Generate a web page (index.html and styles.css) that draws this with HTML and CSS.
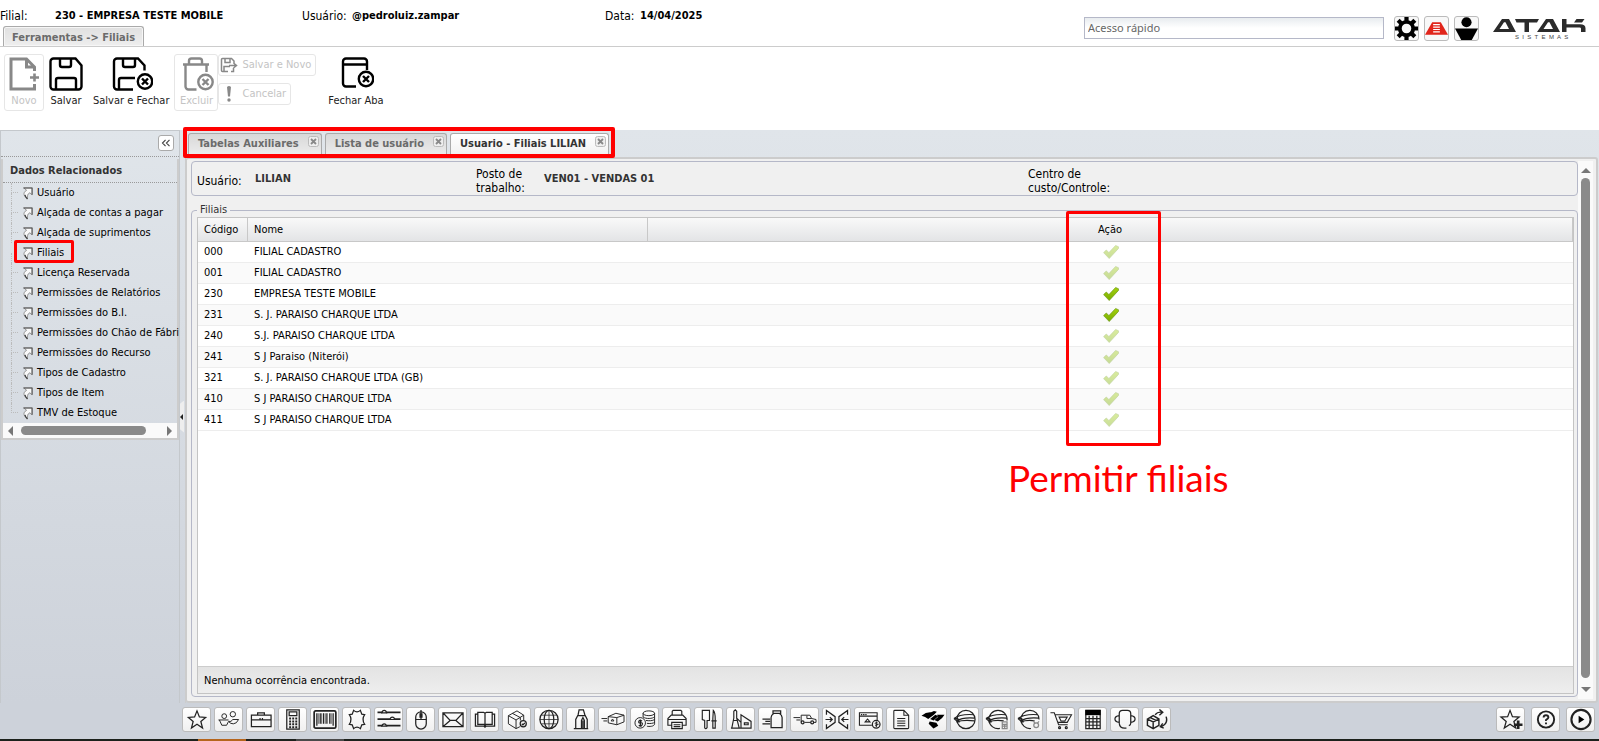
FILE: index.html
```html
<!DOCTYPE html>
<html lang="pt-BR">
<head>
<meta charset="utf-8">
<title>Usuario - Filiais LILIAN</title>
<link rel="stylesheet" href="styles.css">
</head>
<body>
<svg class="defs" aria-hidden="true">
  <defs>
    <linearGradient id="green" x1="0" y1="0" x2="0" y2="1"><stop offset="0" stop-color="#a4d20c"/><stop offset="1" stop-color="#78ac00"/></linearGradient>
    <symbol id="check" viewBox="0 0 16 16"><path d="M.6 8.600 3.300 6l2.600 2.600L12.600 1.500l2.900 1.300v1.600L6.200 14.500z" fill="url(#green)" stroke="#6f9a1c" stroke-width=".7"/></symbol>
    <symbol id="link" viewBox="0 0 12 14"><path d="M2 1.500h9v7.500L8.600 6.800C5.500 8 6 11 6 13 2.500 11 0 7 5 4z" fill="#fafafa" stroke="#888" stroke-width="1"/><path d="M1.500 1.500H11v7.500" fill="none" stroke="#555" stroke-width="1.100"/><path d="M3.200 9q.5 2.500 2.800 4.500" fill="none" stroke="#444" stroke-width="1.500"/></symbol>
    <symbol id="x" viewBox="0 0 11 11"><rect x=".5" y=".5" width="10" height="10" rx="2" fill="#eee" stroke="#bbb"/><path d="M3 3l5 5M8 3l-5 5" stroke="#888" stroke-width="1.800"/></symbol>
  </defs>
</svg>

<header class="top">
  <div class="top-left">
    <div class="session">
      <span class="s-label w-filial">Filial:</span><b class="s-value w-empresa">230 - EMPRESA TESTE MOBILE</b>
      <span class="s-label w-user">Usuário:</span><b class="s-value w-login">@pedroluiz.zampar</b>
      <span class="s-label w-date">Data:</span><b class="s-value">14/04/2025</b>
    </div>
    <div class="ribbon-tabs"><button class="ribbon-tab" type="button">Ferramentas -&gt; Filiais</button></div>
  </div>
  <div class="top-right">
    <input class="quick" type="text" placeholder="Acesso rápido" aria-label="Acesso rápido">
    <button class="sq" type="button" aria-label="Configurações"><svg viewBox="0 0 24 24"><circle cx="12" cy="12" r="7" fill="none" stroke="#000" stroke-width="4"/><g stroke="#000" stroke-width="4.400"><path d="M12 0v5M12 19v5M0 12h5M19 12h5M3.300 3.300l3.400 3.400M17.300 17.300l3.400 3.400M20.700 3.300l-3.400 3.400M6.700 17.300l-3.400 3.400"/></g></svg></button>
    <button class="sq" type="button" aria-label="Estrutura"><svg viewBox="0 0 24 24"><path d="M7.500 5.500h9L24 18.500H0z" fill="#e1251b"/><path d="M8.500 8h7M8.500 10.500h7M8.500 13h7M8.500 15.500h7" stroke="#fff" stroke-width="1.200"/></svg></button>
    <button class="sq" type="button" aria-label="Perfil"><svg viewBox="0 0 24 24"><circle cx="12" cy="5.500" r="5.300"/><path d="M0 12h24l-6.500 12h-11z"/></svg></button>
    <svg class="logo" viewBox="0 0 94 21" role="img" aria-label="ATAK Sistemas">
      <g fill="#2b2b2b" fill-rule="evenodd"><path d="M0 13 9 0h7l7 13zM6.500 10h9.500L12.500 3.300h-1.500z"/><path d="M22 0h24l-2 3.400H36V13h-4.500V3.400H23.500z"/><path d="M44 13 53 0h7l7 13zM50.500 10h9.500L56.500 3.300h-1.500z"/><path d="M69 0h4.500v5.200H87q5.500 0 5.500 4V13H88V9.600q0-1.200-1.500-1.200H73.500V13H69zM81 3.600 83.500 0h8L89 3.600z"/></g>
      <text x="22" y="20" font-size="6" font-family="Liberation Sans, sans-serif" fill="#444">S&#160; I&#160; S&#160; T&#160; E&#160; M&#160; A&#160; S</text>
    </svg>
  </div>
</header>

<nav class="ribbon" aria-label="Ferramentas">
  <button class="big off" type="button" disabled><svg viewBox="0 0 32 36"><path d="M26.500 15V11L18.500 3H3v30h23.500v-5M18.500 3v8h8" fill="none" stroke="#888" stroke-width="3"/><path d="M22 21.500h9M26.500 17.500v8" stroke="#888" stroke-width="2.600"/></svg>Novo</button>
  <button class="big" type="button"><svg viewBox="0 0 36 36"><g fill="none" stroke="#000" stroke-width="2.400"><path d="M5.500 2.500h22l6 7v21a3 3 0 0 1-3 3h-25a3 3 0 0 1-3-3v-25a3 3 0 0 1 3-3z"/><path d="M12 3v6a2 2 0 0 0 2 2h7a2 2 0 0 0 2-2V3M8 33V24a2 2 0 0 1 2-2h16a2 2 0 0 1 2 2v9"/></g></svg>Salvar</button>
  <button class="big wide" type="button"><svg viewBox="0 0 44 36"><g fill="none" stroke="#000" stroke-width="2.400"><path d="M24 33.500H8a3 3 0 0 1-3-3v-25a3 3 0 0 1 3-3h21l6.500 7v5"/><path d="M14 3v6a2 2 0 0 0 2 2h8a2 2 0 0 0 2-2V3M10 33V24a2 2 0 0 1 2-2h14"/><circle cx="36" cy="25.500" r="7.200"/><path d="M33 22.500l6 6M39 22.500l-6 6"/></g></svg>Salvar e Fechar</button>
  <button class="big off" type="button" disabled><svg viewBox="0 0 36 36"><g fill="none" stroke="#888" stroke-width="2.400"><path d="M5 8.500h26M11 8V5a2.500 2.500 0 0 1 2.500-2.500h8A2.500 2.500 0 0 1 24 5v3M7.500 8v22.500a3 3 0 0 0 3 3h8M28.500 8v8"/><circle cx="27.500" cy="26" r="7.200"/><path d="M24.500 23l6 6M30.500 23l-6 6"/></g></svg>Excluir</button>
  <div class="stack">
    <button class="small off" type="button" disabled><svg viewBox="0 0 18 16"><g fill="none" stroke="#888" stroke-width="1.500"><path d="M8 14.500H2.500a1 1 0 0 1-1-1v-11a1 1 0 0 1 1-1h9L14 4v2M5 2v3.500h5V2M4 14V9.500h6M11 14.500h2.500V11M9 8.500h7M13.500 6l3 2.500-3 2.500"/></g></svg>Salvar e Novo</button>
    <button class="small off" type="button" disabled><svg viewBox="0 0 18 16"><path d="M7 1q2-2 4 0l-1 9.500H8z" fill="#888"/><circle cx="9" cy="14" r="1.700" fill="#888"/></svg>Cancelar</button>
  </div>
  <button class="big tab-close" type="button"><svg viewBox="0 0 36 36"><g fill="none" stroke="#000" stroke-width="2.400"><path d="M18 30.500H8a3 3 0 0 1-3-3v-22a3 3 0 0 1 3-3h18a3 3 0 0 1 3 3V14M5 8.500h24"/><circle cx="28" cy="23" r="7.200"/><path d="M25 20l6 6M31 20l-6 6"/></g></svg>Fechar Aba</button>
</nav>

<div class="work">
  <aside class="side">
    <div class="side-head"><button class="fold" type="button" aria-label="Recolher"><svg viewBox="0 0 16 16"><path d="M7.500 4.500 4 8l3.500 3.500M12 4.500 8.500 8l3.500 3.500" fill="none" stroke="#444" stroke-width="1.300"/></svg></button></div>
    <div class="related">
      <h2>Dados Relacionados</h2>
      <ul class="tree">
        <li><svg><use href="#link"/></svg><a href="#">Usuário</a></li>
        <li><svg><use href="#link"/></svg><a href="#">Alçada de contas a pagar</a></li>
        <li><svg><use href="#link"/></svg><a href="#">Alçada de suprimentos</a></li>
        <li class="marked"><svg><use href="#link"/></svg><a href="#">Filiais</a></li>
        <li><svg><use href="#link"/></svg><a href="#">Licença Reservada</a></li>
        <li><svg><use href="#link"/></svg><a href="#">Permissões de Relatórios</a></li>
        <li><svg><use href="#link"/></svg><a href="#">Permissões do B.I.</a></li>
        <li><svg><use href="#link"/></svg><a href="#">Permissões do Chão de Fábri</a></li>
        <li><svg><use href="#link"/></svg><a href="#">Permissões do Recurso</a></li>
        <li><svg><use href="#link"/></svg><a href="#">Tipos de Cadastro</a></li>
        <li><svg><use href="#link"/></svg><a href="#">Tipos de Item</a></li>
        <li><svg><use href="#link"/></svg><a href="#">TMV de Estoque</a></li>
      </ul>
      <div class="hscroll"><i class="arr left"></i><span class="track"><i class="thumb"></i></span><i class="arr right"></i></div>
    </div>
  </aside>
  <div class="split"><i></i></div>

  <main class="main">
    <div class="tabs">
      <div class="tab"><button type="button">Tabelas Auxiliares</button><svg class="close"><use href="#x"/></svg></div>
      <div class="tab"><button type="button">Lista de usuário</button><svg class="close"><use href="#x"/></svg></div>
      <div class="tab active"><button type="button">Usuario - Filiais LILIAN</button><svg class="close"><use href="#x"/></svg></div>
    </div>
    <div class="panel">
      <div class="content">
        <section class="info">
          <span class="i-label">Usuário:</span><b>LILIAN</b>
          <span class="i-label">Posto de trabalho:</span><b>VEN01 - VENDAS 01</b>
          <span class="i-label">Centro de custo/Controle:</span>
        </section>
        <fieldset class="group">
          <legend>Filiais</legend>
          <div class="grid">
            <table>
              <colgroup><col class="c-code"><col class="c-name"><col></colgroup>
              <thead><tr><th>Código</th><th>Nome</th><th class="act">Ação<span class="frame"></span><span class="note">Permitir filiais</span></th></tr></thead>
              <tbody>
                <tr><td>000</td><td>FILIAL CADASTRO</td><td class="act"><svg class="dim"><use href="#check"/></svg></td></tr>
                <tr><td>001</td><td>FILIAL CADASTRO</td><td class="act"><svg class="dim"><use href="#check"/></svg></td></tr>
                <tr><td>230</td><td>EMPRESA TESTE MOBILE</td><td class="act"><svg><use href="#check"/></svg></td></tr>
                <tr><td>231</td><td>S. J. PARAISO CHARQUE LTDA</td><td class="act"><svg><use href="#check"/></svg></td></tr>
                <tr><td>240</td><td>S.J. PARAISO CHARQUE LTDA</td><td class="act"><svg class="dim"><use href="#check"/></svg></td></tr>
                <tr><td>241</td><td>S J Paraiso (Niterói)</td><td class="act"><svg class="dim"><use href="#check"/></svg></td></tr>
                <tr><td>321</td><td>S. J. PARAISO CHARQUE LTDA (GB)</td><td class="act"><svg class="dim"><use href="#check"/></svg></td></tr>
                <tr><td>410</td><td>S J PARAISO CHARQUE LTDA</td><td class="act"><svg class="dim"><use href="#check"/></svg></td></tr>
                <tr><td>411</td><td>S J PARAISO CHARQUE LTDA</td><td class="act"><svg class="dim"><use href="#check"/></svg></td></tr>
              </tbody>
            </table>
            <div class="status">Nenhuma ocorrência encontrada.</div>
          </div>
        </fieldset>
      </div>
      <div class="vscroll"><i class="arr up"></i><span class="track"><i class="thumb"></i></span><i class="arr down"></i></div>
    </div>
  </main>
</div>

<footer class="dock">
  <div class="modules">
    <button type="button" aria-label="Favoritos"><svg viewBox="0 0 24 24"><path d="M12 3l2.500 6.300 6.500.5-5 4.200 1.800 7-5.800-4-5.800 4L8 14 3 9.800l6.500-.5z"/></svg></button>
    <button type="button" aria-label="Pesagem"><svg viewBox="0 0 24 24"><g stroke-width="1"><circle cx="7" cy="8.500" r="2.500"/><circle cx="16" cy="6.500" r="2.800"/><path d="M1 12.500h10.500M2 12.500l2.500 5.500h5l2-4M12 14.500q1.500 2 4.500 2 3.500 0 5.500-4.500h-6l-2 2h-2.500"/></g></svg></button>
    <button type="button" aria-label="Maleta"><svg viewBox="0 0 24 24"><path d="M2 7.500h20.500v12H2zM2 12.500h20.500M8.500 7.500V5h7v2.500M11 10.500v2M13.500 10.500v2"/></svg></button>
    <button type="button" aria-label="Calculadora"><svg viewBox="0 0 24 24"><path d="M5.500 2h13v20h-13z"/><path d="M8 4h8v4H8z"/><path d="M8 11h8.500M8 14h8.500M8 17h8.500M8 20h8.500" stroke-width="2" stroke-dasharray="2 1.200"/></svg></button>
    <button type="button" aria-label="Código de barras"><svg viewBox="0 0 24 24"><rect x=".7" y="3" width="22.600" height="18" rx="1.500" stroke-width="1.800"/><path d="M3.500 5.500v13M7 5.500v11M10.500 5.500v11M14 5.500v11M17 5.500v11M20.500 5.500v13"/><path d="M5 5.500v11M8.500 5.500v11M12.300 5.500v11M18.500 5.500v11" stroke-width=".7"/></svg></button>
    <button type="button" aria-label="Couro"><svg viewBox="0 0 24 24"><path d="M8.500 2.500q3.500 3 7 0l1.500 4 3 .5q-3.500 5 0 10l-3 .5-1.500 4q-3.500-3-7 0l-1.500-4-3-.5q3.500-5 0-10l3-.5z"/></svg></button>
    <button type="button" aria-label="Parâmetros"><svg viewBox="0 0 24 24"><path d="M0 4.500h5M9 4.500h15M0 11.500h13M18 11.500h6M0 18.500h5M9.500 18.500h14.500" stroke-width="1.800"/><path d="M4.500 5q.5-2.500 2.500-2.500T9.500 5zM13 12q.5-2.500 2.500-2.500T18 12zM4.500 19q.5-2.500 2.500-2.500T9.500 19z"/></svg></button>
    <button type="button" aria-label="Mouse"><svg viewBox="0 0 24 24"><rect x="6.500" y="4" width="11" height="18" rx="5.500"/><path d="M6.500 12h11M12 2v10M11 6h2v3.500h-2z"/></svg></button>
    <button type="button" aria-label="Mensagens"><svg viewBox="0 0 24 24"><path d="M1.500 5h21v14.500h-21zM1.500 5l7.500 8h6l7.500-8M1.500 19.500L9 13M22.500 19.500L15 13"/></svg></button>
    <button type="button" aria-label="Livro"><svg viewBox="0 0 24 24"><path d="M4.500 6.500H2V19h9l1 1 1-1h9V6.500h-2.500M12 5.500V19M4.500 4.500h6l1.500 1 1.500-1h6V17H13l-1 1-1-1H4.500z"/></svg></button>
    <button type="button" aria-label="Estoque"><svg viewBox="0 0 24 24"><path d="M3 8l9-5 7 4.500v6M3 8v8.500l8 5 4-2M3 8l8 4.500 8-5M11 12.500v9M7 5.500l8.500 4.500v3" stroke-width="1"/><circle cx="18.500" cy="16.500" r="3.200"/><path d="M17 16.500l1.200 1.200 2-2.200"/></svg></button>
    <button type="button" aria-label="Global"><svg viewBox="0 0 24 24"><circle cx="12" cy="12" r="9.500"/><ellipse cx="12" cy="12" rx="5" ry="9.500"/><path d="M12 2.500v19M4 7.500h16M2.500 12h19M4 16.500h16" stroke-width=".8"/></svg></button>
    <button type="button" aria-label="Silo"><svg viewBox="0 0 24 24"><path d="M4.500 21.500h15M6.500 21.500V12L9 7l1-5h4.500l1.500 5 2.500 5v9.500M8.500 8h8M12.500 21v-8l1.500-3 1.500 3v8M14 13v8"/></svg></button>
    <button type="button" aria-label="Expedição"><svg viewBox="0 0 24 24"><path d="M7 9l8-3.500 8.500 2v7L16 17.500 7 15.500zM16 17.500V10M7 9l9 1 7.500-2.500M0 11h6M2 13.500h4M10 13.500l1.500-2 1.500 2z" stroke-width="1"/></svg></button>
    <button type="button" aria-label="Financeiro"><svg viewBox="0 0 24 24"><g stroke-width="1"><ellipse cx="16" cy="5.500" rx="6" ry="2.500"/><path d="M10 5.500v4M22 5.500v11c0 3-6 3-8 2.500M10 9.500c3 2 10 2 12-.5M13 13c3 .5 7 .5 9-1M14 16c3 .5 7 0 8-1"/><circle cx="7" cy="15.500" r="5.500"/></g><path d="M9 13.500q-3-1.500-3.500.5t2 1.500 1.500 2-3.500.5M7.200 12v7" stroke-width="1.200"/></svg></button>
    <button type="button" aria-label="Impressora"><svg viewBox="0 0 24 24"><path d="M7 7.500V3.500l1-1h8l1 1v4M6 18H2.500v-7l3.500-3.500h12l3.500 3.500v7H18M6.500 15h11v6.500h-11zM2.500 12h19M8.500 17.500h7M8.500 19.500h7" stroke-width="1.200"/></svg></button>
    <button type="button" aria-label="Corte"><svg viewBox="0 0 24 24"><path d="M5 2.500h7.500V13H10v7.500q-1.500 2-2.500 0V13L5 12zM16.500 2.500q2 2 2 9v9.500h-2.500v-9.500zM14.500 13.500h5.500" stroke-width="1.200"/></svg></button>
    <button type="button" aria-label="Indústria"><svg viewBox="0 0 24 24"><path d="M1.500 21h21v-7L12 7v14M2.500 20.500l2-10V3.500L6 2l1.500 1.500v7l2.500 10M4 13h4M7.500 10.500L12 15M15.500 15.500h4v2h-4z" stroke-width="1.200"/></svg></button>
    <button type="button" aria-label="Leite"><svg viewBox="0 0 24 24"><path d="M12 3h8v2.500h-8zM13 5.500q-3 2-3 4.500v10.500h11.500V10q0-2.500-3-4.500M1 11.500h8M4 14h5M1 16.500h8"/></svg></button>
    <button type="button" aria-label="Frete"><svg viewBox="0 0 24 24"><path d="M0 10h7M3 12.500h4M8 14.500v-7h9l2 3.500 4.500 1v3h-2.500M18 15h-6.500M14 8v3h5" stroke-width="1"/><circle cx="9.500" cy="15" r="1.500"/><circle cx="19.500" cy="15" r="1.500"/></svg></button>
    <button type="button" aria-label="Integração"><svg viewBox="0 0 24 24"><path d="M1 7V2.500l9 6.500v6l-9 6.500V17M23 7V2.500L14 9v6l9 6.500V17M0 12h7M4.500 9.500 7 12l-2.500 2.500M24 12h-7M19.500 9.500 17 12l2.500 2.500"/></svg></button>
    <button type="button" aria-label="Cobrança"><svg viewBox="0 0 24 24"><path d="M15 18H2V5h18.500v8M2 8.500h18.500M8 14.500l2.500-3 2.500 3z" stroke-width="1.100"/><path d="M3.500 6.800h6" stroke-dasharray="1.500 .8"/><circle cx="19.500" cy="17" r="4"/><path d="M21 15.500q-2.500-1-2.500.5t2.500 1-2.500 1.500M19.700 14v6" stroke-width="1"/></svg></button>
    <button type="button" aria-label="Documentos"><svg viewBox="0 0 24 24"><path d="M4.500 3.500q0-1 1-1h9.500l5 5v13q0 1-1 1H5.500q-1 0-1-1zM15 2.500v5h5M8 11h8.500M8 13.500h8.500M8 16h8.500M8 18.500h8.500" stroke-width="1.100"/></svg></button>
    <button type="button" aria-label="Receita"><svg viewBox="0 0 24 24"><g class="solid"><path d="M0 8q5-4 10-3.500l3-1.500 3 1-3 3-6 4.500Q4 9 0 8z"/><path d="M9 11.500l5.500-4.500 3 1.500-5 4.500z"/><path d="M16 7l8 0q-2 4-7 7l-3.500-1.500 4-3.500z"/><path d="M8.500 14l7 1.500 2 3-5 3-5-5z"/></g></svg></button>
    <button type="button" aria-label="Fiscal"><svg viewBox="0 0 24 24"><circle cx="13" cy="12" r="9.500"/><path d="M.5 11Q7 6 21 7M.5 11l3 2.500Q9 9.500 22 10.500M3 14.500q8-2.500 19-1M1 11h3.500v3.500h2" stroke-width="1.200"/></svg></button>
    <button type="button" aria-label="Fiscal cálculo"><svg viewBox="0 0 24 24"><path d="M15 21.300A9.500 9.500 0 1 1 22.500 13M.5 11Q7 6 21 7M.5 11l3 2.500Q9 9.500 22 10.500M3 14.500q8-2.500 16-1M1 11h3.500v3.500h2" stroke-width="1.200"/><g class="grey"><path d="M17.500 14.500h5v7h-5zM17.500 17h5M17.500 19h5M20 17v4"/></g></svg></button>
    <button type="button" aria-label="Fiscal ajustes"><svg viewBox="0 0 24 24"><path d="M14 21.400A9.500 9.500 0 1 1 22.500 12M.5 11Q7 6 21 7M.5 11l3 2.500Q9 9.500 22 10.500M3 14.500q8-2.500 15-1M1 11h3.500v3.500h2" stroke-width="1.200"/><g class="grey"><circle cx="19.500" cy="18" r="2.500"/><path d="M16.500 14l2 2M22.500 14l-2 2"/></g></svg></button>
    <button type="button" aria-label="Compras"><svg viewBox="0 0 24 24"><path d="M1 5h4l4.500 12.500H19M6 7h17l-4.500 8H9M10 9.500h8.500l-2.500 4h-4z" stroke-width="1.100"/><circle cx="10.500" cy="20.500" r="1"/><circle cx="17.500" cy="20.500" r="1"/></svg></button>
    <button type="button" aria-label="Planilha"><svg viewBox="0 0 24 24"><path d="M4.500 2.500h15v19h-15zM4.500 11h15M4.500 14.500h15M4.500 18h15M8 8v13M12 8v13M16 8v13"/><path class="solid" d="M4 2h16v5.500H4z"/></svg></button>
    <button type="button" aria-label="Suporte"><svg viewBox="0 0 24 24"><path d="M6 16V6q0-3.500 3.500-3.500h5Q18 2.500 18 6v10M6 8q-4.500.5-4.500 3.500T6 15M18 8q4.500.5 4.500 3.500T18 15M6 16q.5 5 5.500 5h2M18 16q0 2-2 2.500"/></svg></button>
    <button type="button" aria-label="Devolução"><svg viewBox="0 0 24 24"><path d="M2 11.500l6-3.500 6 3.500v6.500l-6 3.500-6-3.500zM2 11.500l6 3 6-3M8 14.500v7M5 10l6 3M10 7q3-3.500 7-2.500M14.500 1.500l3.500 3-3.500 3M16 19.500q8-3 5.500-10.500M19 21l-3.500-1.500L18 16" stroke-width="1.500"/></svg></button>
  </div>
  <div class="helpers">
    <button type="button" aria-label="Adicionar favorito"><svg viewBox="0 0 24 24"><path d="M11 2.500l2.500 6.500 7 .500-5.500 4.500L17 21l-6-4-6 4 2-7L1.500 9.500l7-.5z"/><path d="M19.500 13v9M15 17.500h9" stroke-width="2.800"/></svg></button>
    <button type="button" aria-label="Ajuda"><svg viewBox="0 0 24 24"><circle cx="12" cy="12" r="8.500" stroke-width="2"/><path d="M9.500 10q0-2.500 2.500-2.500T14.500 10q0 1-2.500 2.500v1M12 15v2" stroke-width="2"/></svg></button>
    <button type="button" aria-label="Executar"><svg viewBox="0 0 24 24"><circle cx="12" cy="12" r="10" stroke-width="2.200"/><path class="solid" d="M9.500 8v8l6-4z"/></svg></button>
  </div>
</footer>
<div class="desk"></div>
</body>
</html>
```
FILE: styles.css
```css
*, *::before, *::after { box-sizing: border-box; }
html, body { margin: 0; height: 100%; }
body {
  display: flex; flex-direction: column; min-height: 100vh;
  font: 11px/14px "DejaVu Sans Condensed", "DejaVu Sans", sans-serif;
  font-stretch: condensed;
  color: #000; background: #fff;
}
button { font: inherit; color: inherit; cursor: pointer; padding: 0; }
.defs { position: absolute; width: 0; height: 0; }

/* header */
.top { display: flex; justify-content: space-between; height: 47px; border-bottom: 1px solid #ccc; }
.top-left { display: flex; flex-direction: column; justify-content: space-between; }
.session { display: flex; align-items: center; padding-top: 9px; white-space: nowrap; }
.s-label { font-size: 12px; }
.w-filial { width: 55px; }
.w-empresa { width: 247px; }
.w-user { width: 50px; }
.w-login { width: 253px; }
.w-date { width: 35px; }
.ribbon-tabs { padding-left: 3px; height: 20px; }
.ribbon-tab {
  height: 20px; padding: 2px 8px 0; border: 1px solid #aaa; border-bottom: 0; border-radius: 3px 3px 0 0;
  background: linear-gradient(#e0e0e0, #eee); color: #6b6b6b; font-weight: bold; box-shadow: inset 0 0 0 1px #f6f6f6;
}
.top-right { display: flex; align-items: flex-start; gap: 5px; padding: 16px 12px 0 0; }
.quick {
  width: 300px; height: 22px; margin: 1px 5px 0 0; padding: 0 3px 2px; border: 1px solid #b5b8c8;
  background: linear-gradient(#e8ecef, #fff 10px); font: 11px "Noto Sans", sans-serif;
}
.quick::placeholder { color: #666; }
.sq { width: 25px; height: 25px; border: 1px solid #bbb; border-radius: 3px; background: #f8f8f8; }
.sq svg { display: block; width: 23px; height: 23px; }
.logo { width: 94px; height: 21px; margin: 3px 0 0 9px; }

/* ribbon */
.ribbon { display: flex; align-items: flex-start; height: 83px; padding: 7px 0 0 4px; }
.big {
  display: flex; flex-direction: column; align-items: center; gap: 2px; height: 57px; padding: 2px 3px 0;
  border: 1px solid transparent; border-radius: 3px; background: none; white-space: nowrap; color: #222;
}
.big svg { height: 36px; margin-top: -1px; }
.off, .off:disabled { color: #c4c4c4; border-color: #e6e6e6; cursor: default; }
.big.wide { padding: 2px 2px 0; margin: 0 2px; }
.stack { display: flex; flex-direction: column; align-items: flex-start; gap: 7px; }
.small { display: flex; align-items: center; gap: 4px; height: 22px; padding: 0 4px 0 1px; border: 1px solid #e6e6e6; border-radius: 3px; background: none; }
.small svg { width: 18px; height: 16px; }
.tab-close { margin-left: 8px; }

/* work area */
.work { flex: 1; display: flex; min-height: 0; background: linear-gradient(#e0e5ea, #cdd2da); }
.side { width: 180px; border: 1px solid #c4c8cc; border-bottom: 0; }
.side-head { display: flex; justify-content: flex-end; height: 26px; padding: 4px 5px 0 0; border-bottom: 1px dotted #999; }
.fold { width: 16px; height: 16px; border: 1px solid #aaa; border-radius: 3px; background: #fff; }
.fold svg { display: block; width: 14px; height: 14px; }
.related { margin-top: 2px; border: solid #ccc; border-width: 0 2px 2px; }
.related h2 { margin: 0; height: 24px; padding-left: 7px; border-bottom: 1px dotted #999; font: bold 11px/24px "DejaVu Sans Condensed", sans-serif; font-stretch: condensed; color: #333; }
.tree { margin: 0; padding: 0; list-style: none; }
.tree li { position: relative; display: flex; align-items: center; gap: 4px; height: 20px; padding-left: 19px; white-space: nowrap; }
.tree li::before { content: ""; position: absolute; left: 8px; top: 0; width: 7px; height: 10px; border: dotted #bbb; border-width: 0 0 1px 1px; }
.tree li:not(:last-child)::after { content: ""; position: absolute; left: 8px; top: 10px; height: 10px; border-left: 1px dotted #bbb; }
.tree svg { flex: none; width: 11px; height: 14px; }
.tree a { color: #000; text-decoration: none; }
.tree .marked::before { left: 11px; top: -3px; width: 60px; height: 23px; border: 3px solid #f00; border-radius: 2px; z-index: 1; }
.hscroll { display: flex; align-items: center; height: 15px; padding: 0 5px; background: #fafafa; }
.hscroll .track { flex: 1; padding: 0 21px 0 8px; }
.hscroll .thumb { display: block; height: 9px; border-radius: 5px; background: #8a8a8a; }
.arr { width: 0; height: 0; border: 5px solid transparent; }
.left { border-right-color: #777; border-left: 0; }
.right { border-left-color: #777; border-right: 0; }
.up { border-bottom-color: #777; border-top: 0; }
.down { border-top-color: #777; border-bottom: 0; }
.split { display: flex; align-items: center; width: 5px; }
.split i { display: flex; align-items: center; width: 4px; height: 32px; background: #eee; clip-path: polygon(0 10%, 100% 0, 100% 100%, 0 90%); }
.split i::after { content: ""; border: 3px solid transparent; border-left: 0; border-right-color: #222; }

.main { flex: 1; display: flex; flex-direction: column; min-width: 0; border-left: 1px solid #ccc; }
.tabs { position: relative; display: flex; align-self: flex-start; gap: 3px; height: 27px; padding: 3px 6px 0 2px; }
.tabs::after { content: ""; position: absolute; inset: -3px 0 -1px -3px; border: 4px solid #f00; border-radius: 2px; }
.tab { display: flex; align-items: flex-start; gap: 9px; height: 24px; padding: 2px 2px 0 9px; border: 1px solid #aaa; border-bottom: 0; border-radius: 3px 3px 0 0; background: linear-gradient(#d8d8d8, #eee); color: #6b6b6b; }
.tab button { border: 0; background: none; font-weight: bold; line-height: 16px; white-space: nowrap; }
.tab.active { background: linear-gradient(#fff, #f0f0f0); color: #333; }
.close { flex: none; width: 11px; height: 11px; }
.panel { flex: 1; display: flex; border: 2px solid #ccc; border-width: 2px 2px 2px 1px; border-radius: 3px; background: #f0f0f0; margin-right: 1px; }
.content { flex: 1; display: flex; flex-direction: column; gap: 7px; padding: 2px 0 4px 4px; min-width: 0; }
.info { display: grid; grid-template-columns: 58px 221px 68px 484px 90px; align-items: center; height: 35px; padding-left: 5px; border: 1px solid #b5b8c8; border-radius: 4px; }
.i-label { padding-top: 4px; font-size: 12px; line-height: 14px; }
.info b { color: #333; }
.group { flex: 1; display: flex; margin: 0; padding: 0 3px 2px 5px; min-width: 0; border: 1px solid #b5b8c8; border-radius: 4px; }
.group legend { padding: 0 3px; margin: 0; color: #333; }
.grid { flex: 1; display: flex; flex-direction: column; justify-content: space-between; border: 1px solid #c4c4c4; background: #fff; }
table { width: 100%; table-layout: fixed; border-collapse: separate; border-spacing: 0; }
.c-code { width: 50px; }
.c-name { width: 400px; }
th, td { padding: 0 6px; text-align: left; white-space: nowrap; }
th { height: 24px; font-weight: normal; background: linear-gradient(#f9f9f9, #e3e4e6); border: solid #c8c8c8; border-width: 0 1px 1px 0; }
td { height: 21px; border-bottom: 1px solid #ededed; }
tbody tr:nth-child(even) { background: #fafafa; }
.act { text-align: center; }
th.act { position: relative; z-index: 1; }
td.act svg { display: block; width: 16px; height: 16px; margin: 0 auto; }
.dim { opacity: .4; }
.frame { position: absolute; left: calc(50% - 44px); top: -7px; width: 95px; height: 235px; border: 3px solid #f00; border-radius: 2px; }
.note { position: absolute; left: calc(50% - 102px); top: 238px; font: 37px/44px Lato, sans-serif; color: #f00; }
.status { height: 27px; padding-left: 6px; border-top: 1px solid #ccc; background: linear-gradient(#e3e3e3, #eee); line-height: 27px; }
.vscroll { display: flex; flex-direction: column; align-items: center; gap: 5px; width: 15px; margin: 2px 3px 2px 0; padding: 7px 0; background: #fafafa; }
.vscroll .track { flex: 1; width: 9px; padding-bottom: 4px; }
.vscroll .thumb { display: block; height: 100%; border-radius: 5px; background: #8a8a8a; }

/* bottom bar */
.dock { display: flex; justify-content: space-between; height: 36px; padding: 4px 4px 0 182px; background: #cdd2da; }
.modules { display: flex; gap: 3px; }
.helpers { display: flex; gap: 6px; }
.dock button { width: 29px; height: 25px; border: 1px solid #bbb; border-radius: 3px; background: linear-gradient(#fff, #f0f0f0); }
.dock svg { display: block; width: 24px; height: 23px; margin: 0 auto; fill: none; stroke: #222; stroke-width: 1.300; }
.dock .solid { fill: #000; stroke: none; }
.dock .grey { stroke: #888; }
.desk { height: 2px; background: linear-gradient(90deg, #1c211c 198px, #b5651d 198px 246px, #1c211c 246px 296px, #4a4a4a 296px 344px, #1c211c 344px); }
```
